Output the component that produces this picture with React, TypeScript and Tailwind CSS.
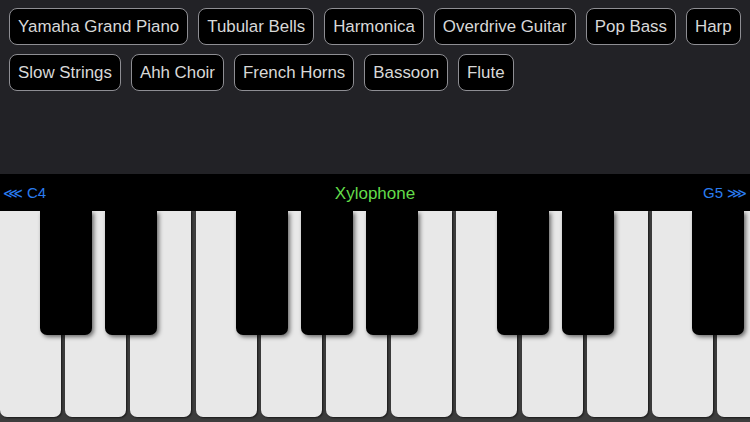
import React from 'react';

const presets = [
  ['Yamaha Grand Piano', 'Tubular Bells', 'Harmonica', 'Overdrive Guitar', 'Pop Bass', 'Harp'],
  ['Slow Strings', 'Ahh Choir', 'French Horns', 'Bassoon', 'Flute'],
];

const KEY_W = 750 / 11.5;
const whiteKeys = 12;
// index of the white key that a black key sits after
const blackAfter = [0, 1, 3, 4, 5, 7, 8, 10];

const PresetButton: React.FC<{ label: string }> = ({ label }) => (
  <button className="shrink-0 whitespace-nowrap h-[37px] px-[8px] pt-[2px] rounded-[8px] border border-[#8e8e93] bg-black text-[16.9px] text-[#d8d8d8] leading-none flex items-center">
    {label}
  </button>
);

export default function App() {
  return (
    <div className="w-[750px] h-[422px] overflow-hidden flex flex-col bg-[#222226]" style={{ fontFamily: '"Liberation Sans", Arial, sans-serif' }}>
      {/* instrument presets */}
      <div className="h-[174px] px-[9px] pt-[8px] flex flex-col gap-[9px]">
        {presets.map((row, i) => (
          <div key={i} className="flex gap-[10px]">
            {row.map((p) => (
              <PresetButton key={p} label={p} />
            ))}
          </div>
        ))}
      </div>

      {/* range bar */}
      <div className="h-[37px] bg-black flex items-center justify-between px-[3px] pt-[2px] relative">
        <span className="text-[15px] text-[#2a7cf0] flex items-center gap-[4px]">
          <span style={{ fontFamily: '"DejaVu Sans", sans-serif' }} className="text-[14px]">⋘</span>C4
        </span>
        <span className="absolute left-0 right-0 text-center text-[17px] text-[#63dc4a]">Xylophone</span>
        <span className="text-[15px] text-[#2a7cf0] flex items-center gap-[4px]">
          G5<span style={{ fontFamily: '"DejaVu Sans", sans-serif' }} className="text-[14px]">⋙</span>
        </span>
      </div>

      {/* keyboard */}
      <div className="relative flex-1 bg-[#3d3d3d] overflow-hidden">
        <div className="flex h-[206px]">
          {Array.from({ length: whiteKeys }).map((_, i) => (
            <div key={i} className="shrink-0 h-full" style={{ width: KEY_W }}>
              <div className="h-full w-[61px] bg-[#e8e8e8] rounded-b-[7px] shadow-[1px_1px_2px_rgba(0,0,0,0.6)]" />
            </div>
          ))}
        </div>
        {blackAfter.map((k) => (
          <div
            key={k}
            className="absolute top-0 w-[52px] h-[124px] bg-black rounded-b-[7px] shadow-[2px_2px_4px_rgba(0,0,0,0.55)]"
            style={{ left: KEY_W * (k + 1) - 25 }}
          />
        ))}
      </div>
    </div>
  );
}
